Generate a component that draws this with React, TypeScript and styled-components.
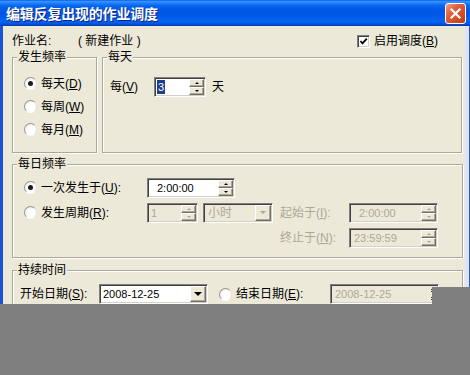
import React from "react";
import styled, { createGlobalStyle } from "styled-components";

const Global = createGlobalStyle`
  html, body { margin: 0; padding: 0; background: #fff; }
  body { font-family: "Liberation Sans", "Noto Sans CJK SC", sans-serif; font-size: 12px; }
  * { box-sizing: border-box; }
`;

const Window = styled.div`
  position: relative;
  width: 470px;
  height: 375px;
  overflow: hidden;
  background: #ece9d8;
  display: flex;
  flex-direction: column;
  line-height: 14px;
  color: #000;
`;

const TitleBar = styled.div`
  flex: none;
  height: 26px;
  display: flex;
  align-items: center;
  justify-content: space-between;
  padding: 0 4px 0 6px;
  background: linear-gradient(
    to bottom,
    #0a5ee8 0%,
    #3a93ff 6%,
    #1f80fb 12%,
    #0866f0 22%,
    #0058e6 40%,
    #0057e8 60%,
    #0463f2 78%,
    #055cea 88%,
    #0047c7 96%,
    #003caa 100%
  );
`;

const Title = styled.div`
  font-family: "Noto Sans CJK SC", sans-serif;
  font-weight: 700;
  font-size: 14px;
  line-height: 16px;
  color: #fff;
  text-shadow: 1px 1px 0 #0a1f7a;
  letter-spacing: -0.2px;
`;

const CloseButton = styled.div`
  width: 21px;
  height: 21px;
  border: 1px solid #fff;
  border-radius: 3px;
  background: linear-gradient(135deg, #f0a28a 0%, #e3603c 35%, #d24b25 70%, #c03a16 100%);
  display: flex;
  align-items: center;
  justify-content: center;
`;

const Body = styled.div`
  flex: 1;
  display: flex;
  flex-direction: column;
  border-left: 3px solid #1a55d8;
  padding: 7px 7px 0 9px;
  box-shadow: inset -1px 0 #2a58c8, inset -5px 0 #dfe3f3;
`;

const TopRow = styled.div`
  height: 16px;
  margin-bottom: 1px;
  display: flex;
  align-items: center;
`;

const JobLabel = styled.span`
  width: 66px;
`;

const Spacer = styled.div`
  flex: 1;
`;

const CheckWrap = styled.label`
  display: flex;
  align-items: center;
  gap: 4px;
  margin-right: 25px;
`;

const CheckBox = styled.span`
  width: 13px;
  height: 13px;
  flex: none;
  border: 1px solid;
  border-color: #808080 #fff #fff #808080;
  box-shadow: inset 1px 1px #404040, inset -1px -1px #d4d0c8;
  background: #fff;
  display: flex;
  align-items: center;
  justify-content: center;
`;

const U = styled.span`
  text-decoration: underline;
  text-underline-offset: 1px;
`;

const GroupRow = styled.div`
  display: flex;
  gap: 5px;
`;

const Group = styled.fieldset<{ $w?: number; $h?: number; $mt?: number }>`
  margin: ${(p) => p.$mt ?? 0}px 0 0 0;
  padding: 0;
  width: ${(p) => (p.$w ? `${p.$w}px` : "auto")};
  height: ${(p) => (p.$h ? `${p.$h}px` : "auto")};
  flex: none;
  min-width: 0;
  border: 1px solid #aca899;
  box-shadow: inset 1px 1px #fff, 1px 1px #fff;
`;

const Legend = styled.legend`
  margin-left: 4px;
  padding: 0 1px;
  line-height: 14px;
  font-size: 12px;
  background: #ece9d8;
`;

const GroupInner = styled.div<{ $pt: number; $pl: number; $gap?: number }>`
  display: flex;
  flex-direction: column;
  gap: ${(p) => p.$gap ?? 0}px;
  padding: ${(p) => p.$pt}px 0 0 ${(p) => p.$pl}px;
`;

const OptionRow = styled.div<{ $h: number; $pl?: number }>`
  height: ${(p) => p.$h}px;
  display: flex;
  align-items: center;
  padding-left: ${(p) => p.$pl ?? 0}px;
`;

const RadioOpt = styled.label<{ $w?: number }>`
  display: flex;
  align-items: center;
  gap: 4px;
  flex: none;
  width: ${(p) => (p.$w ? `${p.$w}px` : "auto")};
`;

const Radio = styled.span<{ $on?: boolean }>`
  width: 13px;
  height: 13px;
  flex: none;
  border-radius: 50%;
  border: 1px solid;
  border-color: #9a988e #e4e2d8 #fff #9a988e;
  background: radial-gradient(circle at 62% 62%, #ffffff 45%, #e6e4da 100%);
  display: flex;
  align-items: center;
  justify-content: center;
  &::after {
    content: "";
    width: 5px;
    height: 5px;
    border-radius: 50%;
    background: #1a1a1a;
    display: ${(p) => (p.$on ? "block" : "none")};
  }
`;

const Label = styled.span<{ $w?: number; $disabled?: boolean; $mr?: number }>`
  flex: none;
  width: ${(p) => (p.$w ? `${p.$w}px` : "auto")};
  margin-right: ${(p) => p.$mr ?? 0}px;
  color: ${(p) => (p.$disabled ? "#aca899" : "#000")};
  white-space: nowrap;
`;

const Field = styled.div<{ $w: number; $disabled?: boolean; $mr?: number }>`
  width: ${(p) => p.$w}px;
  height: 20px;
  flex: none;
  margin-right: ${(p) => p.$mr ?? 0}px;
  display: flex;
  align-items: stretch;
  padding: 1px;
  border: 1px solid;
  border-color: #808080 #fff #fff #808080;
  box-shadow: inset 1px 1px #404040, inset -1px -1px #d4d0c8;
  background: ${(p) => (p.$disabled ? "#ece9d8" : "#fff")};
  color: ${(p) => (p.$disabled ? "#aca899" : "#000")};
  font-size: 11px;
`;

const FieldText = styled.div<{ $pad: number }>`
  flex: 1;
  display: flex;
  align-items: center;
  padding-left: ${(p) => p.$pad}px;
  font-size: 11px;
  white-space: nowrap;
  overflow: hidden;
`;

const CjkFieldText = styled(FieldText)`
  font-size: 12px;
`;

const Highlight = styled.span`
  background: #1e3d8f;
  color: #fff;
  padding: 0 1px;
  line-height: 14px;
`;

const SpinCol = styled.div`
  width: 15px;
  flex: none;
  display: flex;
  flex-direction: column;
`;

const SpinBtn = styled.div`
  flex: 1;
  display: flex;
  align-items: center;
  justify-content: center;
  background: #ece9d8;
  border: 1px solid;
  border-color: #fff #716f64 #716f64 #fff;
  box-shadow: inset -1px -1px #aca899;
`;

const Arrow = styled.span<{ $dir: "up" | "down"; $disabled?: boolean; $size?: number }>`
  width: 0;
  height: 0;
  border-left: ${(p) => p.$size ?? 2}px solid transparent;
  border-right: ${(p) => p.$size ?? 2}px solid transparent;
  ${(p) =>
    p.$dir === "up"
      ? `border-bottom: ${(p.$size ?? 2)}px solid ${p.$disabled ? "#aca899" : "#000"};`
      : `border-top: ${(p.$size ?? 2)}px solid ${p.$disabled ? "#aca899" : "#000"};`}
`;

const DropBtn = styled.div`
  width: 16px;
  flex: none;
  display: flex;
  align-items: center;
  justify-content: center;
  background: #ece9d8;
  border: 1px solid;
  border-color: #fff #716f64 #716f64 #fff;
  box-shadow: inset -1px -1px #aca899;
`;

const DitherCol = styled.div`
  width: 17px;
  flex: none;
  display: flex;
  flex-direction: column;
  justify-content: space-around;
  align-items: flex-end;
  padding-right: 2px;
`;

const Dither = styled.span`
  width: 4px;
  height: 4px;
  background: repeating-conic-gradient(#333 0% 25%, #ece9d8 0% 50%) 0 0 / 2px 2px;
`;

const Occluder = styled.div`
  position: absolute;
  inset: 0;
  background: #7f7f7f;
  clip-path: polygon(0 304px, 432px 304px, 432px 287px, 470px 287px, 470px 375px, 0 375px);
`;

function Spin({ w, value, pad, disabled, mr }: { w: number; value: React.ReactNode; pad: number; disabled?: boolean; mr?: number }) {
  return (
    <Field $w={w} $disabled={disabled} $mr={mr}>
      <FieldText $pad={pad}>{value}</FieldText>
      <SpinCol>
        <SpinBtn>
          <Arrow $dir="up" $disabled={disabled} />
        </SpinBtn>
        <SpinBtn>
          <Arrow $dir="down" $disabled={disabled} />
        </SpinBtn>
      </SpinCol>
    </Field>
  );
}

export default function App() {
  return (
    <>
      <Global />
      <Window>
        <TitleBar>
          <Title>编辑反复出现的作业调度</Title>
          <CloseButton>
            <svg width="13" height="13" viewBox="0 0 13 13">
              <path d="M2.5 2.5 L10.5 10.5 M10.5 2.5 L2.5 10.5" stroke="#fff" strokeWidth="2.2" strokeLinecap="square" />
            </svg>
          </CloseButton>
        </TitleBar>
        <Body>
          <TopRow>
            <JobLabel>作业名:</JobLabel>
            <span>( 新建作业 )</span>
            <Spacer />
            <CheckWrap>
              <CheckBox>
                <svg width="9" height="9" viewBox="0 0 9 9">
                  <path d="M1.5 4 L3.5 6.3 L7.8 1.6" stroke="#000" strokeWidth="1.8" fill="none" />
                </svg>
              </CheckBox>
              <span>
                启用调度(<U>B</U>)
              </span>
            </CheckWrap>
          </TopRow>

          <GroupRow>
            <Group $w={85} $h={103}>
              <Legend>发生频率</Legend>
              <GroupInner $pt={8} $pl={11}>
                <OptionRow $h={23}>
                  <RadioOpt>
                    <Radio $on />
                    <span>
                      每天(<U>D</U>)
                    </span>
                  </RadioOpt>
                </OptionRow>
                <OptionRow $h={23}>
                  <RadioOpt>
                    <Radio />
                    <span>
                      每周(<U>W</U>)
                    </span>
                  </RadioOpt>
                </OptionRow>
                <OptionRow $h={23}>
                  <RadioOpt>
                    <Radio />
                    <span>
                      每月(<U>M</U>)
                    </span>
                  </RadioOpt>
                </OptionRow>
              </GroupInner>
            </Group>
            <Group $w={360} $h={103}>
              <Legend>每天</Legend>
              <GroupInner $pt={13} $pl={7}>
                <OptionRow $h={20}>
                  <Label $w={44}>
                    每(<U>V</U>)
                  </Label>
                  <Spin w={52} pad={1} mr={6} value={<Highlight>3</Highlight>} />
                  <Label>天</Label>
                </OptionRow>
              </GroupInner>
            </Group>
          </GroupRow>

          <Group $h={101} $mt={4}>
            <Legend>每日频率</Legend>
            <GroupInner $pt={6} $pl={11} $gap={4}>
              <OptionRow $h={21}>
                <RadioOpt $w={123}>
                  <Radio $on />
                  <span>
                    一次发生于(<U>U</U>):
                  </span>
                </RadioOpt>
                <Spin w={88} pad={8} value="2:00:00" />
              </OptionRow>
              <OptionRow $h={21}>
                <RadioOpt $w={123}>
                  <Radio />
                  <span>
                    发生周期(<U>R</U>):
                  </span>
                </RadioOpt>
                <Spin w={51} pad={2} mr={5} disabled value="1" />
                <Field $w={70} $disabled $mr={7}>
                  <CjkFieldText $pad={3}>小时</CjkFieldText>
                  <DropBtn>
                    <Arrow $dir="down" $disabled $size={3} />
                  </DropBtn>
                </Field>
                <Label $w={69} $disabled>
                  起始于(<U>I</U>):
                </Label>
                <Spin w={89} pad={8} disabled value="2:00:00" />
              </OptionRow>
              <OptionRow $h={21} $pl={256}>
                <Label $w={69} $disabled>
                  终止于(<U>N</U>):
                </Label>
                <Spin w={89} pad={3} disabled value="23:59:59" />
              </OptionRow>
            </GroupInner>
          </Group>

          <Group $h={120} $mt={5}>
            <Legend>持续时间</Legend>
            <GroupInner $pt={7} $pl={7}>
              <OptionRow $h={20}>
                <Label $w={79}>
                  开始日期(<U>S</U>):
                </Label>
                <Field $w={109} $mr={11}>
                  <FieldText $pad={2}>2008-12-25</FieldText>
                  <DropBtn>
                    <Arrow $dir="down" $size={4} />
                  </DropBtn>
                </Field>
                <RadioOpt $w={111}>
                  <Radio />
                  <span>
                    结束日期(<U>E</U>):
                  </span>
                </RadioOpt>
                <Field $w={109} $disabled>
                  <FieldText $pad={3}>2008-12-25</FieldText>
                  <DitherCol>
                    <Dither />
                    <Dither />
                  </DitherCol>
                </Field>
              </OptionRow>
            </GroupInner>
          </Group>
        </Body>
        <Occluder />
      </Window>
    </>
  );
}
